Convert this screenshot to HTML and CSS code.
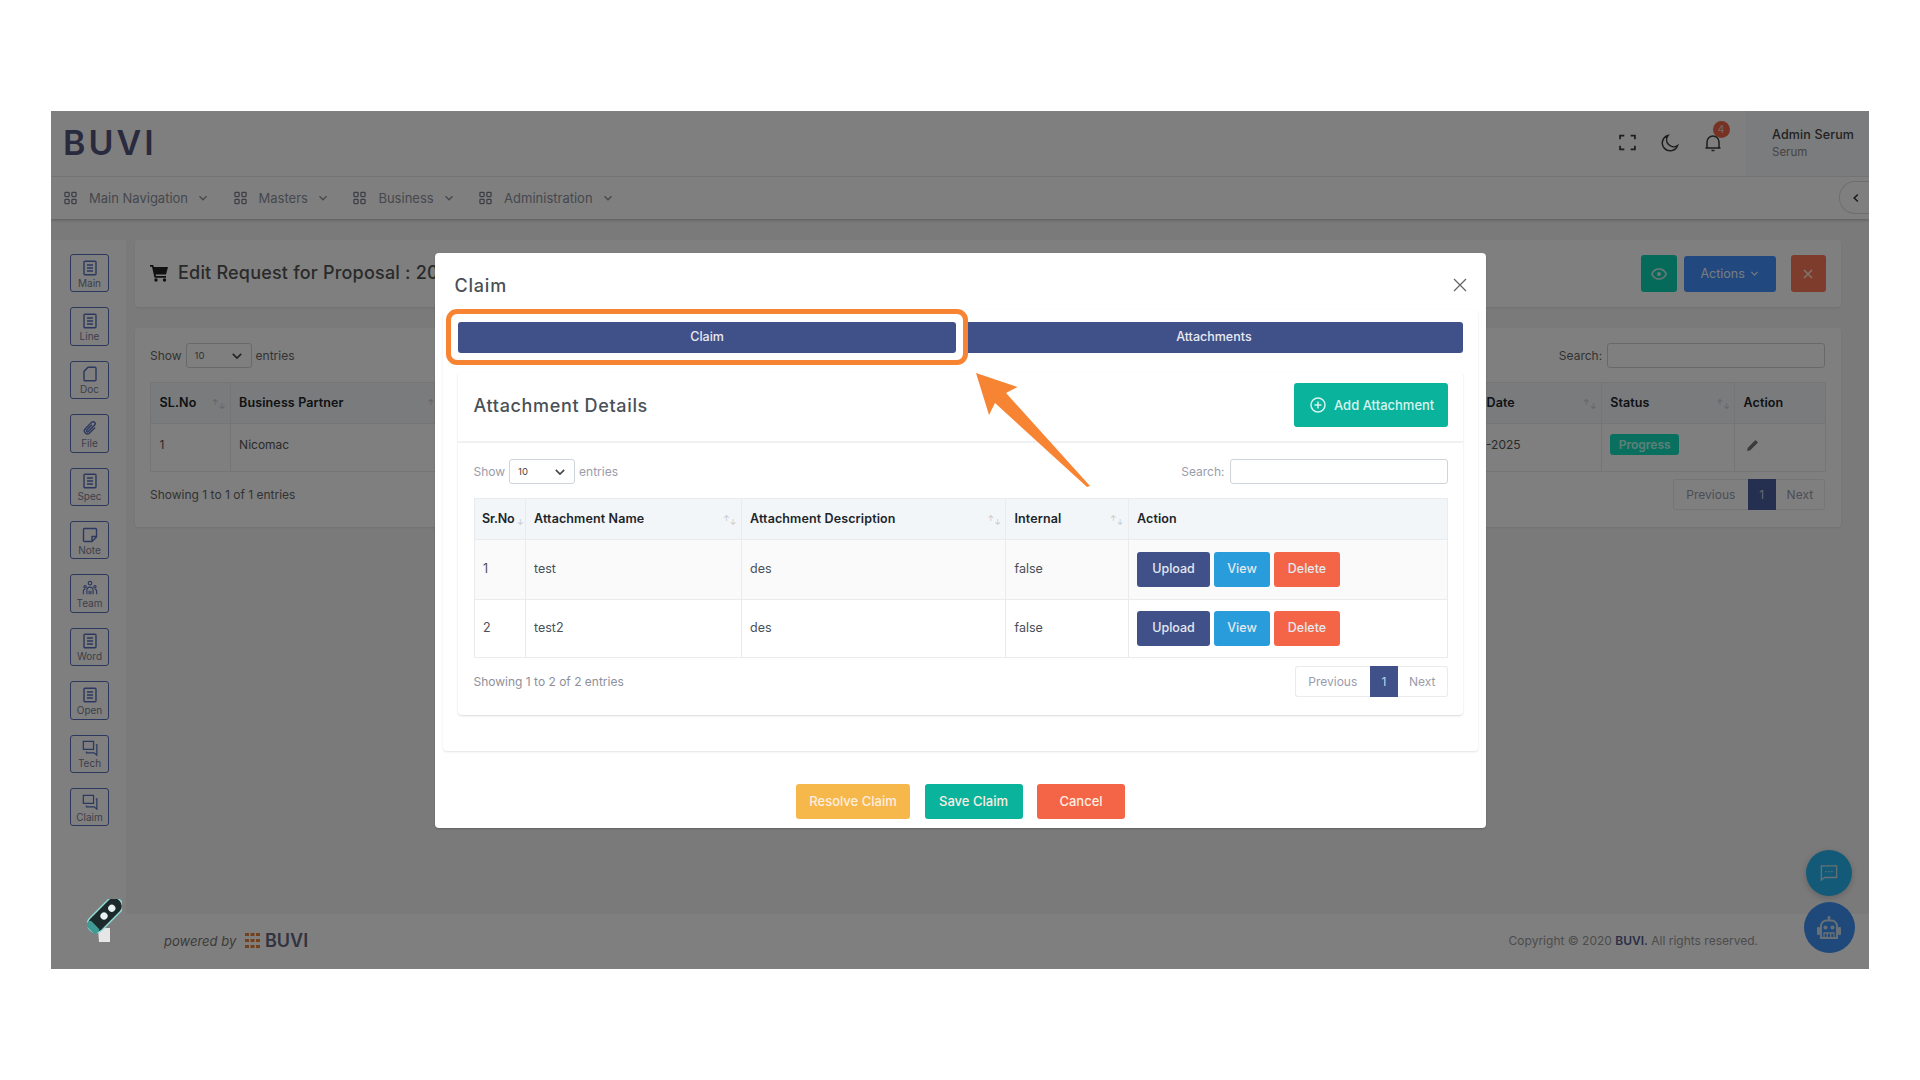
FILE: index.html
```html
<!DOCTYPE html>
<html lang="en">
<head>
<meta charset="utf-8">
<title>Claim</title>
<link rel="stylesheet" href="styles.css">
</head>
<body>
<svg class="defs" width="0" height="0" aria-hidden="true">
  <symbol id="i-grid" viewBox="0 0 14 14"><g fill="none" stroke="currentColor" stroke-width="1.4"><rect x="1" y="1" width="4.5" height="4.5" rx=".8"/><rect x="8.5" y="1" width="4.5" height="4.5" rx=".8"/><rect x="1" y="8.5" width="4.5" height="4.5" rx=".8"/><rect x="8.5" y="8.5" width="4.5" height="4.5" rx=".8"/></g></symbol>
  <symbol id="i-chev" viewBox="0 0 10 10"><path d="M1.5 3.2 5 6.8l3.5-3.6" fill="none" stroke="currentColor" stroke-width="1.3"/></symbol>
  <symbol id="i-list" viewBox="0 0 16 16"><g fill="none" stroke="currentColor" stroke-width="1.4"><rect x="2" y="1.2" width="12" height="13.6" rx="1"/><path d="M5 5h6M5 8h6M5 11h6"/></g></symbol>
  <symbol id="i-file" viewBox="0 0 16 16"><path d="M6 1.2h7a1 1 0 0 1 1 1v11.6a1 1 0 0 1-1 1H3a1 1 0 0 1-1-1V5.4z" fill="none" stroke="currentColor" stroke-width="1.4"/></symbol>
  <symbol id="i-clip" viewBox="0 0 16 16"><path d="M13 7.5 7.6 13a3 3 0 0 1-4.3-4.2l6.4-6.5a2 2 0 0 1 2.9 2.8L6.3 11.500a1 1 0 0 1-1.500-1.400L10 4.800" fill="none" stroke="currentColor" stroke-width="1.400"/></symbol>
  <symbol id="i-note" viewBox="0 0 16 16"><path d="M14.500 10V2.500a1 1 0 0 0-1-1H2.500a1 1 0 0 0-1 1v11a1 1 0 0 0 1 1H10zM14.500 9.500H10v5" fill="none" stroke="currentColor" stroke-width="1.400"/></symbol>
  <symbol id="i-team" viewBox="0 0 18 18"><g fill="none" stroke="currentColor" stroke-width="1.300"><circle cx="9" cy="3.500" r="2"/><path d="M5.500 16v-4.500a3.500 3.500 0 0 1 7 0V16M8 12v4M10 12v4"/><path d="M1.500 16v-3.500a2.500 2.500 0 0 1 2-2.300M16.500 16v-3.500a2.500 2.500 0 0 0-2-2.300"/><circle cx="3.500" cy="7.500" r="1.300"/><circle cx="14.500" cy="7.500" r="1.300"/></g></symbol>
  <symbol id="i-chat" viewBox="0 0 18 18"><g fill="none" stroke="currentColor" stroke-width="1.400"><path d="M1.500 1.500h11.500v9H4.500l-3 0z"/><path d="M15.500 5.500h1.200v11.500l-3-2.500H5v-1.500"/></g></symbol>
  <symbol id="i-plus" viewBox="0 0 16 16"><g fill="none" stroke="currentColor" stroke-width="1.500"><circle cx="8" cy="8" r="7"/><path d="M8 4.500v7M4.500 8h7"/></g></symbol>
</svg>

<div class="frame">
  <div class="app">
    <header class="topbar">
      <span class="logo">BUVI</span>
      <div class="top-tools">
        <span class="tool"><svg class="ico-17" viewBox="0 0 16 16"><path d="M1 5V1.500h4M11 1.500h4V5M15 11v3.500h-4M5 14.500H1V11" fill="none" stroke="currentColor" stroke-width="1.600"/></svg></span>
        <span class="tool"><svg class="ico-18" viewBox="0 0 18 18"><path d="M7 1.500a7.800 7.800 0 1 0 9.500 10A7 7 0 0 1 7 1.500z" fill="none" stroke="currentColor" stroke-width="1.500"/></svg></span>
        <span class="tool"><svg class="ico-18" viewBox="0 0 18 18"><path d="M3 14V8a6 6 0 0 1 12 0v6zM1.500 14h15M7.500 16.500h3" fill="none" stroke="currentColor" stroke-width="1.500"/></svg><span class="badge">4</span></span>
      </div>
      <div class="user">
        <span class="user-name">Admin Serum</span>
        <span class="user-org">Serum</span>
      </div>
    </header>

    <nav class="navbar">
      <span class="nav-item"><svg class="nav-ico"><use href="#i-grid"/></svg>Main Navigation<svg class="nav-chev"><use href="#i-chev"/></svg></span>
      <span class="nav-item"><svg class="nav-ico"><use href="#i-grid"/></svg>Masters<svg class="nav-chev"><use href="#i-chev"/></svg></span>
      <span class="nav-item"><svg class="nav-ico"><use href="#i-grid"/></svg>Business<svg class="nav-chev"><use href="#i-chev"/></svg></span>
      <span class="nav-item"><svg class="nav-ico"><use href="#i-grid"/></svg>Administration<svg class="nav-chev"><use href="#i-chev"/></svg></span>
      <span class="collapse"><svg viewBox="0 0 10 10" class="ico-10"><path d="M6.800 1.500 3.200 5l3.600 3.500" fill="none" stroke="currentColor" stroke-width="1.500"/></svg></span>
    </nav>

    <div class="main">
      <aside class="sidebar">
        <a class="side-btn"><svg><use href="#i-list"/></svg>Main</a>
        <a class="side-btn"><svg><use href="#i-list"/></svg>Line</a>
        <a class="side-btn"><svg><use href="#i-file"/></svg>Doc</a>
        <a class="side-btn"><svg><use href="#i-clip"/></svg>File</a>
        <a class="side-btn"><svg><use href="#i-list"/></svg>Spec</a>
        <a class="side-btn"><svg><use href="#i-note"/></svg>Note</a>
        <a class="side-btn"><svg><use href="#i-team"/></svg>Team</a>
        <a class="side-btn"><svg><use href="#i-list"/></svg>Word</a>
        <a class="side-btn"><svg><use href="#i-list"/></svg>Open</a>
        <a class="side-btn"><svg><use href="#i-chat"/></svg>Tech</a>
        <a class="side-btn"><svg><use href="#i-chat"/></svg>Claim</a>
      </aside>

      <section class="content">
        <div class="page-head">
          <svg class="cart" viewBox="0 0 18 18"><path d="M0 1h3.200l.7 2H18l-2 7.500H5.600l.4 1.500H16v1.700H4.500L2 2.700H0z" fill="currentColor"/><circle cx="6" cy="16" r="1.700" fill="currentColor"/><circle cx="14.500" cy="16" r="1.700" fill="currentColor"/></svg>
          <h1 class="page-title">Edit Request for Proposal : 2025</h1>
          <div class="page-actions">
            <span class="pa-btn pa-eye"><svg class="ico-16" viewBox="0 0 16 16"><path d="M.8 8C2.300 4.800 5 3 8 3s5.700 1.800 7.200 5c-1.500 3.200-4.200 5-7.200 5S2.300 11.200.8 8z" fill="none" stroke="currentColor" stroke-width="1.700"/><circle cx="8" cy="8" r="2" fill="currentColor"/></svg></span>
            <span class="pa-btn pa-actions">Actions<svg class="chev-sm"><use href="#i-chev"/></svg></span>
            <span class="pa-btn pa-close"><svg class="ico-10" viewBox="0 0 10 10"><path d="M1 1l8 8M9 1l-8 8" stroke="currentColor" stroke-width="1.500"/></svg></span>
          </div>
        </div>

        <div class="list-card">
          <div class="dt-top">
            <div class="dt-len">Show <span class="dt-select">10<svg class="sel-chev"><use href="#i-chev"/></svg></span> entries</div>
            <div class="dt-search">Search: <span class="dt-input"></span></div>
          </div>
          <table class="tbl bg-tbl">
            <colgroup><col class="b1"><col class="b2"><col class="b3"><col class="b4"><col class="b5"><col class="b6"></colgroup>
            <thead>
              <tr><th class="sort">SL.No<span class="arrows"><i>↑</i><i>↓</i></span></th><th class="sort">Business Partner<span class="arrows"><i>↑</i><i>↓</i></span></th><th></th><th class="sort">Date<span class="arrows"><i>↑</i><i>↓</i></span></th><th class="sort">Status<span class="arrows"><i>↑</i><i>↓</i></span></th><th>Action</th></tr>
            </thead>
            <tbody>
              <tr><td>1</td><td>Nicomac</td><td></td><td>-2025</td><td><span class="progress">Progress</span></td><td><svg class="pencil" viewBox="0 0 12 12"><path d="M0 12l.8-3.200L8.500 1l2.500 2.500-7.700 7.700z" fill="currentColor"/></svg></td></tr>
            </tbody>
          </table>
          <div class="dt-bottom">
            <span class="dt-info bg-info">Showing 1 to 1 of 1 entries</span>
            <div class="pager"><span class="pg pg-prev">Previous</span><span class="pg pg-cur">1</span><span class="pg pg-next">Next</span></div>
          </div>
        </div>
      </section>
    </div>

    <footer class="footer">
      <div class="powered">
        <em>powered by</em>
        <svg class="mini-grid" viewBox="0 0 15 15"><g fill="#e8803a"><rect x="0" y="0" width="4" height="3"/><rect x="5.500" y="0" width="4" height="3"/><rect x="11" y="0" width="4" height="3"/><rect x="0" y="6" width="4" height="3"/><rect x="5.500" y="6" width="4" height="3"/><rect x="11" y="6" width="4" height="3"/><rect x="0" y="12" width="4" height="3"/><rect x="5.500" y="12" width="4" height="3"/><rect x="11" y="12" width="4" height="3"/></g></svg>
        <span class="mini-logo">BUVI</span>
      </div>
      <div class="copyright">Copyright © 2020 <b>BUVI.</b> All rights reserved.</div>
    </footer>
  </div>

  <span class="fab fab-chat"><svg viewBox="0 0 20 20" class="fab-ico-s"><path d="M1.500 2h17v13H5l-3.500 3z" fill="none" stroke="currentColor" stroke-width="1.400"/><path d="M6 8.500h1.500M9.300 8.500h1.500M12.500 8.500H14" stroke="currentColor" stroke-width="1.400"/></svg></span>
  <span class="fab fab-bot"><svg viewBox="0 0 26 26" class="fab-ico-b"><path d="M13 1.500v4" stroke="currentColor" stroke-width="1.800"/><circle cx="13" cy="2.500" r="1.500" fill="currentColor"/><path d="M5 11a5.500 5.500 0 0 1 5.500-5.500h5A5.500 5.500 0 0 1 21 11v12H5z" fill="none" stroke="currentColor" stroke-width="2"/><rect x="1" y="12" width="3" height="8" rx="1" fill="currentColor"/><rect x="22" y="12" width="3" height="8" rx="1" fill="currentColor"/><circle cx="9.500" cy="12.500" r="2" fill="currentColor"/><circle cx="16.500" cy="12.500" r="2" fill="currentColor"/><path d="M8 18h10v5H8zM11.300 18v5M14.700 18v5" fill="none" stroke="currentColor" stroke-width="1.300"/></svg></span>

  <div class="overlay"></div>

  <svg class="sticker" viewBox="0 0 35 43"><path d="M11 29h12v14H12z" fill="#e6e6e6"/><g transform="rotate(-45 18 16)"><rect x="-3" y="7.500" width="42" height="17" rx="8" fill="#1d2a2b" stroke="#8fdcd6" stroke-width="1.500"/><rect x="-3" y="9" width="7" height="14" rx="2" fill="#3f9a94"/><circle cx="16.600" cy="16" r="3.600" fill="#e8f2f2"/><circle cx="27.600" cy="16" r="3.600" fill="#e8f2f2"/></g></svg>

  <div class="modal">
    <div class="modal-head">
      <h2 class="modal-title">Claim</h2>
      <svg class="modal-x" viewBox="0 0 14 14"><path d="M1 1l12 12M13 1 1 13" stroke="currentColor" stroke-width="1.300"/></svg>
    </div>
    <div class="modal-body">
      <div class="tabs">
        <span class="tab">Claim</span>
        <span class="tab">Attachments</span>
      </div>
      <div class="att-card">
        <div class="att-head">
          <h3 class="att-title">Attachment Details</h3>
          <span class="btn-add"><svg class="ico-16"><use href="#i-plus"/></svg>Add Attachment</span>
        </div>
        <div class="att-body">
          <div class="dt-top">
            <div class="dt-len light">Show <span class="dt-select light-box">10<svg class="sel-chev"><use href="#i-chev"/></svg></span> entries</div>
            <div class="dt-search light">Search: <span class="dt-input light-box wide"></span></div>
          </div>
          <table class="tbl att-tbl">
            <colgroup><col class="c1"><col class="c2"><col class="c3"><col class="c4"><col class="c5"></colgroup>
            <thead>
              <tr><th class="sort tight">Sr.No<span class="arrows small"><i>↓</i></span></th><th class="sort">Attachment Name<span class="arrows"><i>↑</i><i>↓</i></span></th><th class="sort">Attachment Description<span class="arrows"><i>↑</i><i>↓</i></span></th><th class="sort">Internal<span class="arrows"><i>↑</i><i>↓</i></span></th><th>Action</th></tr>
            </thead>
            <tbody>
              <tr class="odd"><td>1</td><td>test</td><td>des</td><td>false</td><td class="btn-cell"><div class="row-btns"><span class="act up">Upload</span><span class="act vw">View</span><span class="act del">Delete</span></div></td></tr>
              <tr class="even"><td>2</td><td>test2</td><td>des</td><td>false</td><td class="btn-cell"><div class="row-btns"><span class="act up">Upload</span><span class="act vw">View</span><span class="act del">Delete</span></div></td></tr>
            </tbody>
          </table>
          <div class="dt-bottom att-bottom">
            <span class="dt-info">Showing 1 to 2 of 2 entries</span>
            <div class="pager light-pager"><span class="pg pg-prev">Previous</span><span class="pg pg-cur">1</span><span class="pg pg-next">Next</span></div>
          </div>
        </div>
      </div>
    </div>
    <div class="modal-foot">
      <span class="foot-btn resolve">Resolve Claim</span>
      <span class="foot-btn save">Save Claim</span>
      <span class="foot-btn cancel">Cancel</span>
    </div>
  </div>

  <div class="callout-box"></div>
  <svg class="callout-arrow" viewBox="0 0 115 115"><polygon points="0,0 41.500,14 30,20 114,113 111,114 19,30 13,42" fill="#f78433"/></svg>
</div>
</body>
</html>
```
FILE: styles.css
```css
* { box-sizing: border-box; }
html, body { margin: 0; padding: 0; background: #fff; }
body {
  width: 1920px;
  height: 1080px;
  overflow: hidden;
  padding: 111px 51px 0;
  font-family: Inter, "Liberation Sans", sans-serif;
  font-size: 13px;
  color: #6f7280;
}
.defs { position: absolute; }
h1, h2, h3 { margin: 0; }
svg { display: block; flex: none; }

.ico-16 { width: 16px; height: 16px; }
.ico-17 { width: 17px; height: 17px; }
.ico-18 { width: 18px; height: 18px; }
.ico-10 { width: 10px; height: 10px; }

.frame {
  position: relative;
  width: 1818px;
  height: 858px;
  overflow: hidden;
}
.app {
  display: flex;
  flex-direction: column;
  height: 100%;
  background: #f4f4f6;
}

/* top bar */
.topbar {
  display: flex;
  align-items: center;
  height: 66px;
  padding-left: 12px;
  background: #fff;
  border-bottom: 1px solid #f0f2f2;
}
.logo {
  padding-bottom: 2px;
  font-size: 34px;
  font-weight: 600;
  letter-spacing: 3px;
  color: #55557e;
}
.top-tools {
  display: flex;
  align-items: center;
  margin-left: auto;
  margin-right: 12px;
  padding-bottom: 2px;
  color: #3a3a3a;
}
.tool {
  position: relative;
  display: flex;
  justify-content: center;
  width: 42.500px;
}
.badge {
  position: absolute;
  top: -13px;
  left: 21px;
  width: 17px;
  height: 17px;
  border-radius: 50%;
  background: #f06548;
  color: #e8c0b8;
  font-size: 10px;
  font-weight: 600;
  line-height: 17px;
  text-align: center;
}
.user {
  display: flex;
  flex-direction: column;
  gap: 3px;
  align-self: stretch;
  justify-content: center;
  width: 123px;
  padding: 0 0 2px 26px;
  background: #f7f9fa;
}
.user-name { font-size: 12.500px; font-weight: 500; letter-spacing: .15px; color: #444; white-space: nowrap; }
.user-org { font-size: 11.500px; color: #8a8a8a; }

/* nav */
.navbar {
  position: relative;
  display: flex;
  align-items: center;
  gap: 25.500px;
  height: 42px;
  padding-left: 13px;
  background: #fff;
  box-shadow: 0 1px 3px rgba(0, 0, 0, .25);
}
.nav-item {
  display: flex;
  align-items: center;
  color: #8d909c;
  white-space: nowrap;
}
.nav-ico { width: 13px; height: 14px; margin-right: 12px; color: #7a7d8a; }
.nav-chev { width: 10px; height: 10px; margin-left: 10px; color: #8d909c; }
.collapse {
  position: absolute;
  right: 0;
  top: 4px;
  display: flex;
  align-items: center;
  justify-content: center;
  width: 30px;
  height: 33px;
  padding-left: 2px;
  border-radius: 16px 0 0 16px;
  background: #fff;
  border: 1px solid #dcdcdc;
  border-right: 0;
  color: #333;
}

/* main */
.main {
  flex: 1;
  display: flex;
  min-height: 0;
  padding-top: 21px;
}
.sidebar {
  display: flex;
  flex-direction: column;
  align-items: center;
  gap: 15px;
  width: 75px;
  padding: 14px 0 0 2px;
  background: #fff;
}
.side-btn {
  display: flex;
  flex-direction: column;
  align-items: center;
  justify-content: center;
  gap: 1px;
  width: 38.500px;
  height: 38.400px;
  padding-top: 2px;
  border: 1.500px solid #5870bd;
  border-radius: 3px;
  font-size: 10px;
  line-height: 12px;
  color: #7c8094;
}
.side-btn svg { width: 16px; height: 16px; color: #5870bd; }

.content {
  flex: 1;
  padding: 0 28.400px 0 8.500px;
  min-width: 0;
}
.page-head {
  display: flex;
  align-items: center;
  height: 67px;
  padding: 0 15px 0 15.500px;
  background: #fff;
  border-radius: 4px;
  box-shadow: 0 1px 2px rgba(0, 0, 0, .08);
}
.cart { width: 18px; height: 18px; color: #222; margin: 0 10px 2px 0; }
.page-title { padding-bottom: 2px; font-size: 18px; font-weight: 500; color: #555; letter-spacing: .2px; white-space: nowrap; }
.page-actions { display: flex; align-items: center; margin-left: auto; }
.pa-btn {
  display: flex;
  align-items: center;
  justify-content: center;
  border-radius: 3px;
  color: #a0c4d0;
}
.pa-eye { width: 36px; height: 37px; background: #0cd4b4; color: #d8f0ec; }
.pa-actions {
  gap: 5px;
  width: 92px;
  height: 36px;
  margin: 0 15px 0 7px;
  background: #4290ff;
  color: #f0f8ff;
  font-size: 12.500px;
}
.chev-sm { width: 9px; height: 9px; }
.pa-close { width: 35px; height: 37px; background: #fc7a58; color: #ffe8e0; }

.list-card {
  height: 199px;
  margin-top: 21px;
  padding: 15px 15.500px 0;
  background: #fff;
  border-radius: 4px;
  box-shadow: 0 1px 2px rgba(0, 0, 0, .08);
}
.dt-top {
  display: flex;
  align-items: center;
  justify-content: space-between;
  height: 25px;
}
.dt-len, .dt-search {
  display: flex;
  align-items: center;
  gap: 4px;
  font-size: 12px;
  color: #666;
}
.dt-search { gap: 5px; }
.dt-select {
  display: flex;
  align-items: center;
  justify-content: space-between;
  width: 66px;
  height: 25px;
  padding: 0 8px;
  border: 1px solid #cfd3da;
  border-radius: 3px;
  font-size: 9.500px;
}
.sel-chev { width: 12px; height: 12px; color: #444; }
.dt-input {
  display: block;
  width: 218px;
  height: 25px;
  border: 1px solid #cfd3da;
  border-radius: 3px;
}

.tbl {
  width: 100%;
  margin-top: 14px;
  border-collapse: collapse;
  table-layout: fixed;
  font-size: 12.500px;
  color: #555;
}
.tbl th, .tbl td {
  padding: 0 7.500px 0 8.500px;
  border: 1px solid #e9ebec;
  text-align: left;
}
.tbl td { padding-bottom: 3px; }
.tbl th {
  position: relative;
  height: 41px;
  padding-bottom: 2px;
  background: #f3f6f9;
  font-weight: 600;
  letter-spacing: .12px;
  color: #212529;
  font-size: 12.500px;
  white-space: nowrap;
}
.arrows {
  position: absolute;
  right: 4px;
  top: 14px;
  display: flex;
  font-size: 8px;
  line-height: 10px;
  font-weight: 400;
  color: #c4c7cc;
}
.arrows i { font-style: normal; }
.arrows i + i { margin-top: 4px; }
.arrows.small { right: 1px; top: 18px; }

.b1 { width: 79.600px; }
.b2 { width: 215.400px; }
.b3 { width: 1032px; }
.b4 { width: 123.700px; }
.b5 { width: 133.300px; }
.b6 { width: 91px; }
.bg-tbl td { height: 48px; padding-bottom: 6px; font-size: 12px; }
.bg-tbl td:nth-child(4) { padding-left: 8px; }
.bg-tbl td:last-child { padding-left: 12px; }
.progress {
  display: block;
  width: 69px;
  height: 21px;
  border-radius: 3px;
  background: #12e0c0;
  color: #bdfff0;
  font-size: 12px;
  font-weight: 600;
  line-height: 21px;
  text-align: center;
}
.pencil { width: 12px; height: 12px; color: #777; }

.dt-bottom {
  display: flex;
  align-items: center;
  justify-content: space-between;
  margin-top: 7px;
}
.dt-info { font-size: 12px; color: #8d909c; }
.bg-info { color: #666; }
.pager {
  display: flex;
  height: 31px;
  font-size: 12px;
  line-height: 29px;
  text-align: center;
  color: #9a9cab;
}
.pg { border: 1px solid #e9ebec; }
.pg-prev { width: 74.500px; border-radius: 3px 0 0 3px; border-right: 0; }
.pg-cur { width: 28px; background: #4a5fa0; border-color: #4a5fa0; color: #c8d0e8; }
.pg-next { width: 49.500px; border-radius: 0 3px 3px 0; border-left: 0; }

/* fabs */
.fab {
  position: absolute;
  display: flex;
  align-items: center;
  justify-content: center;
  border-radius: 50%;
  color: #cfe0ec;
}
.fab-chat { left: 1755px; top: 739px; width: 46px; height: 46px; background: #26b4f0; box-shadow: 0 2px 6px rgba(0,0,0,.2); }
.fab-bot { left: 1752.500px; top: 791px; width: 51px; height: 51px; background: #3e92f4; }
.fab-ico-s { width: 18px; height: 18px; }
.fab-ico-b { width: 26px; height: 26px; }

/* footer */
.footer {
  display: flex;
  align-items: center;
  justify-content: space-between;
  height: 55px;
  padding: 0 111px 2px 113px;
  background: #fff;
  font-size: 12px;
}
.powered { display: flex; align-items: center; color: #777; }
.powered em { font-size: 13px; width: 81px; }
.mini-grid { width: 15px; height: 15px; margin-right: 5px; }
.mini-logo { font-size: 18px; font-weight: 600; color: #66667e; }
.copyright { color: #999; }
.copyright b { color: #555c90; font-weight: 600; }

.overlay {
  position: absolute;
  inset: 0;
  background: rgba(0, 0, 0, .5);
}
.sticker {
  position: absolute;
  left: 36px;
  top: 788px;
  width: 35px;
  height: 43px;
}

/* modal */
.modal {
  position: absolute;
  left: 384px;
  top: 142px;
  width: 1051px;
  height: 575px;
  display: flex;
  flex-direction: column;
  background: #fff;
  border-radius: 4px;
  box-shadow: 0 1px 2px rgba(0, 0, 0, .2);
}
.modal-head {
  display: flex;
  align-items: center;
  justify-content: space-between;
  height: 57px;
  padding: 7px 19.500px 0;
  flex: none;
}
.modal-title { font-size: 18px; font-weight: 500; letter-spacing: .8px; color: #495057; }
.modal-x { width: 14px; height: 14px; color: #666; }
.modal-body {
  flex: none;
  height: 441px;
  margin: 0 8px;
  padding: 12px 15px 0;
  border-radius: 4px;
  box-shadow: 0 1px 2px rgba(56, 65, 74, .15);
}
.tabs { display: flex; gap: 8.500px; }
.tab {
  flex: 1;
  height: 31px;
  padding-bottom: 1px;
  border-radius: 3px;
  background: #405189;
  color: #e8eaf2;
  font-size: 12.500px;
  font-weight: 500;
  line-height: 30px;
  text-align: center;
}
.att-card {
  height: 343px;
  margin-top: 19px;
  border-radius: 4px;
  box-shadow: 0 1px 2px rgba(56, 65, 74, .2);
}
.att-head {
  display: flex;
  align-items: center;
  justify-content: space-between;
  height: 71px;
  padding: 12px 15.500px 15px;
  border-bottom: 2px solid #f0f1f2;
}
.att-title { font-size: 18px; font-weight: 500; letter-spacing: .65px; color: #495057; }
.btn-add {
  display: flex;
  align-items: center;
  gap: 8px;
  width: 153.500px;
  height: 44px;
  padding: 0 0 1px 16px;
  border-radius: 3px;
  background: #0ab39c;
  color: #d8f3ef;
  font-size: 13px;
  font-weight: 500;
  white-space: nowrap;
}
.att-body { padding: 16px 15.500px 0; }
.dt-len.light, .dt-search.light { color: #9a9cab; }
.light-box { border: 1.500px solid #ced4da; color: #444; }
.wide { width: 218px; }
.att-tbl { color: #495057; }
.c1 { width: 51px; }
.c2 { width: 216px; }
.c3 { width: 264.500px; }
.c4 { width: 122.500px; }
.c5 { width: 319px; }
.att-tbl th.tight { letter-spacing: -.2px; padding: 0 0 2px 7.500px; }
.att-tbl tr.odd td { height: 60px; background: #fafafa; }
.att-tbl tr.even td { height: 58px; }
.att-tbl td.btn-cell { padding-bottom: 1px; }
.row-btns { display: flex; gap: 4px; }
.act {
  height: 35px;
  border-radius: 3px;
  color: #e4e8f0;
  font-size: 12.500px;
  font-weight: 500;
  line-height: 33px;
  text-align: center;
}
.up { width: 73px; background: #405189; }
.vw { width: 56px; background: #299cdb; }
.del { width: 66px; background: #f46547; }
.att-bottom { margin-top: 8px; }
.light-pager .pg-prev { width: 75.500px; }
.light-pager .pg-cur { background: #405189; border-color: #405189; }

.modal-foot {
  display: flex;
  justify-content: center;
  gap: 14.500px;
  padding-top: 33px;
}
.foot-btn {
  height: 35px;
  border-radius: 3px;
  color: #fdeee0;
  font-size: 13px;
  font-weight: 500;
  line-height: 35px;
  text-align: center;
}
.resolve { width: 114px; background: #f7b84b; }
.save { width: 98px; background: #0ab39c; }
.cancel { width: 88px; background: #f46547; }

/* annotation */
.callout-box {
  position: absolute;
  left: 395px;
  top: 198px;
  width: 522px;
  height: 56px;
  border: 5px solid #f78433;
  border-radius: 11px;
}
.callout-arrow {
  position: absolute;
  left: 925px;
  top: 262px;
  width: 115px;
  height: 115px;
}
```
